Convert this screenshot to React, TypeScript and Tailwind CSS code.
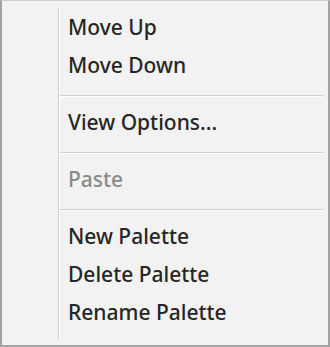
const items: (string | null)[] = [
  "Move Up",
  "Move Down",
  null,
  "View Options...",
  null,
  "Paste",
  null,
  "New Palette",
  "Delete Palette",
  "Rename Palette",
];

const disabled = ["Paste"];

export default function App() {
  return (
    <div
      className="flex h-[347px] w-[330px] flex-col border-2 border-t border-[#a3a3a3] border-t-[#d0d0d0] bg-[#f2f2f2] pt-[7px] pr-[5px] pb-[6px] pl-[2px]"
      style={{ fontFamily: '"Noto Sans", "Open Sans", sans-serif' }}
    >
      <div className="flex flex-1">
        <div className="w-[54px]" />
        <div className="w-[1px] bg-[#d0d0d0]" />
        <div className="w-[1px] bg-white" />
        <div className="flex flex-1 flex-col">
          {items.map((item, i) =>
            item === null ? (
              <div key={i} className="h-[19px] pt-[11px]">
                <div className="h-[1px] bg-[#cfcfcf]" />
                <div className="h-[1px] bg-white" />
              </div>
            ) : (
              <div
                key={i}
                className={`h-[38px] pl-[8px] text-[21px] font-medium leading-[38px] ${
                  disabled.includes(item) ? "text-[#8a8a8a]" : "text-[#262626]"
                }`}
              >
                {item}
              </div>
            )
          )}
        </div>
      </div>
    </div>
  );
}
